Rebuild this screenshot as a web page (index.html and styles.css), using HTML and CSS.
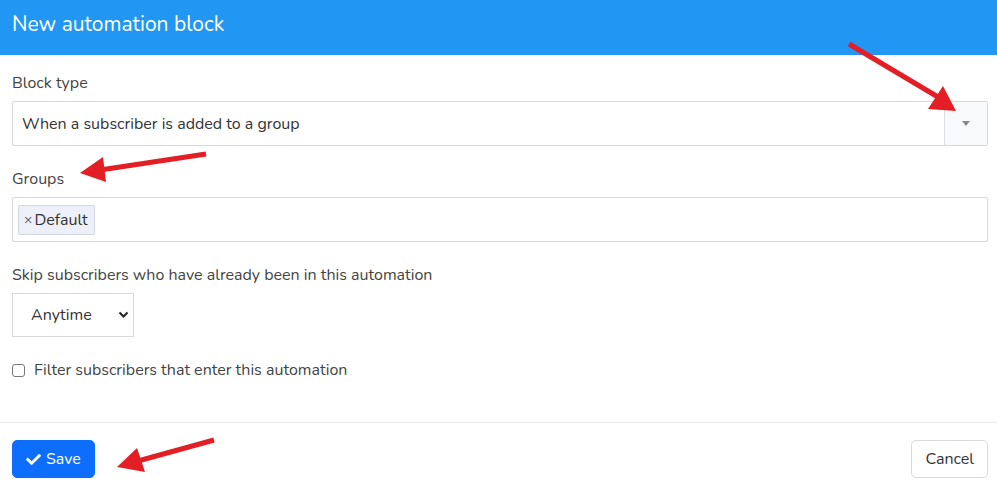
FILE: index.html
```html
<!DOCTYPE html>
<html lang="en">
<head>
    <meta charset="UTF-8">
    <meta name="viewport" content="width=device-width, initial-scale=1.0">
    <title>New automation block</title>
    <link rel="stylesheet" href="styles.css">
</head>
<body>

    <div class="modal">
        <header class="modal-header">
            New automation block
        </header>

        <div class="modal-body">
            <div class="form-group">
                <label class="form-label">Block type</label>
                <div class="select2">
                    <span class="select2-text">When a subscriber is added to a group</span>
                    <span class="select2-arrow"><b></b></span>
                </div>
            </div>

            <div class="form-group">
                <label class="form-label">Groups</label>
                <div class="select2 multi">
                    <span class="tag"><span class="tag-remove">&times;</span>Default</span>
                </div>
            </div>

            <div class="form-group">
                <label class="form-label">Skip subscribers who have already been in this automation</label>
                <div class="small-select">
                    <span>Anytime</span>
                    <svg width="11" height="8" viewBox="0 0 11 8"><path d="M1.5 1.5 L5.5 5.5 L9.5 1.5" fill="none" stroke="#222" stroke-width="2"/></svg>
                </div>
            </div>

            <label class="check">
                <span class="check-box"></span>
                Filter subscribers that enter this automation
            </label>
        </div>

        <footer class="modal-footer">
            <button class="btn btn-primary">
                <svg width="15" height="15" viewBox="0 0 512 512"><path fill="#fff" d="M173.9 439.4l-166.4-166.4c-10-10-10-26.2 0-36.2l36.2-36.2c10-10 26.2-10 36.2 0L192 312.7 432.1 72.6c10-10 26.2-10 36.2 0l36.2 36.2c10 10 10 26.2 0 36.2l-294.4 294.4c-10 10-26.2 10-36.2 0z"/></svg>
                Save
            </button>
            <button class="btn btn-light">Cancel</button>
        </footer>
    </div>

    <!-- red pointers drawn over the form -->
    <svg class="arrows" width="997" height="491" viewBox="0 0 997 491">
        <g fill="#e31e24" stroke="#e31e24">
            <line x1="849" y1="44" x2="938" y2="97" stroke-width="5"/>
            <polygon points="943,86 928,109 956,111" stroke="none"/>
            <line x1="206" y1="154" x2="100" y2="170" stroke-width="5"/>
            <polygon points="103,157 106,182 80,173" stroke="none"/>
            <line x1="214" y1="440" x2="138" y2="461" stroke-width="5"/>
            <polygon points="137,448 145,472 117,467" stroke="none"/>
        </g>
    </svg>

</body>
</html>
```

FILE: styles.css
```css
body {
    font-family: 'Nunito', 'Noto Sans', sans-serif;
    margin: 0;
    padding: 0;
    background-color: #fff;
    color: #444;
}

.modal-header {
    background-color: #2196f3;
    color: #fff;
    height: 55px;
    line-height: 48px;
    padding: 0 12px;
    font-size: 21px;
}

.modal-body {
    padding: 18px 9px 42px 12px;
    font-size: 16px;
}

.form-group {
    margin-bottom: 23px;
}

.form-label {
    display: block;
    margin-bottom: 8px;
    line-height: 20px;
}

.select2 {
    display: flex;
    align-items: center;
    height: 43px;
    border: 1px solid #d8d8e2;
    border-radius: 2px;
    background-color: #fff;
}

.select2-text {
    flex: 1;
    padding-left: 9px;
    color: #333;
}

.select2-arrow {
    width: 42px;
    height: 100%;
    border-left: 1px solid #dddde5;
    background-color: #f8f9fa;
    display: flex;
    align-items: center;
    justify-content: center;
}

.select2-arrow b {
    border-top: 5px solid #888;
    border-left: 4px solid transparent;
    border-right: 4px solid transparent;
}

.select2.multi {
    padding-left: 5px;
}

.tag {
    display: inline-flex;
    align-items: center;
    height: 28px;
    padding: 0 6px 0 5px;
    background-color: #eef0f9;
    border: 1px solid #d2d5e2;
    border-radius: 2px;
    color: #333;
}

.tag-remove {
    color: #555;
    font-size: 14px;
    margin-right: 2px;
}

.small-select {
    display: flex;
    align-items: center;
    justify-content: space-between;
    width: 98px;
    height: 42px;
    padding: 0 4px 0 18px;
    border: 1px solid #d8d8e2;
    color: #333;
}

.check {
    display: flex;
    align-items: center;
    gap: 9px;
    margin-top: 1px;
    line-height: 20px;
}

.check-box {
    width: 11px;
    height: 11px;
    border: 1px solid #777;
    border-radius: 3px;
}

.modal-footer {
    display: flex;
    justify-content: space-between;
    align-items: center;
    padding: 17px 9px 13px 12px;
    border-top: 1px solid #e6e6ee;
}

.btn {
    height: 38px;
    padding: 0 13px;
    border-radius: 5px;
    font-family: inherit;
    font-size: 16px;
    display: flex;
    align-items: center;
    gap: 5px;
}

.btn-primary {
    background-color: #0d6efd;
    border: 1px solid #0d6efd;
    color: #fff;
}

.btn-light {
    background-color: #fff;
    border: 1px solid #d8d8e0;
    color: #333;
}

.arrows {
    position: absolute;
    left: 0;
    top: 0;
    pointer-events: none;
}
```
